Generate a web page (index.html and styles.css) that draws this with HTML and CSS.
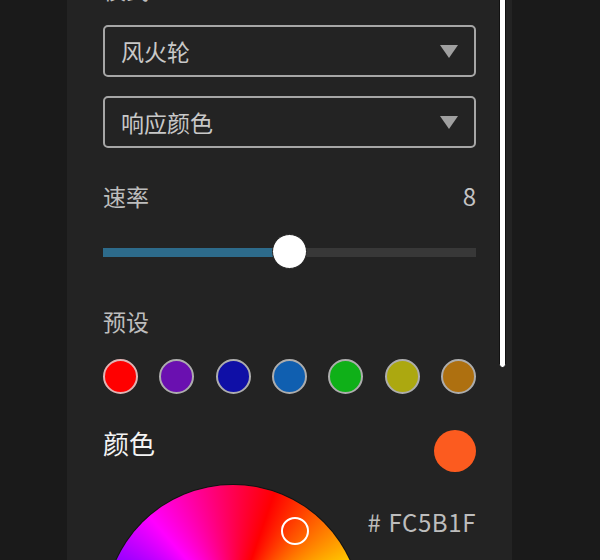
FILE: index.html
```html
<!DOCTYPE html>
<html lang="zh-CN">
<head>
<meta charset="utf-8">
<link rel="stylesheet" href="styles.css">
</head>
<body>
<div class="page">
  <div class="panel">
    <div class="content">
      <div class="label top-label">模式</div>

      <div class="select first">
        <span class="select-text">风火轮</span>
        <span class="caret"></span>
      </div>
      <div class="select second">
        <span class="select-text">响应颜色</span>
        <span class="caret"></span>
      </div>

      <div class="row speed-row">
        <span class="label">速率</span>
        <span class="value">8</span>
      </div>
      <div class="slider">
        <div class="track">
          <div class="fill" style="width:186px"></div>
        </div>
        <div class="thumb" style="left:169px"></div>
      </div>

      <div class="label preset-label">预设</div>
      <div class="swatches">
        <span class="swatch c1"></span>
        <span class="swatch c2"></span>
        <span class="swatch c3"></span>
        <span class="swatch c4"></span>
        <span class="swatch c5"></span>
        <span class="swatch c6"></span>
        <span class="swatch c7"></span>
      </div>

      <div class="row color-row">
        <span class="color-label">颜色</span>
        <span class="current"></span>
      </div>
      <div class="picker">
        <div class="wheel">
          <span class="marker"></span>
        </div>
        <div class="hex"><span class="hash">#</span>FC5B1F</div>
      </div>
    </div>
    <div class="scrollbar"></div>
  </div>
</div>
</body>
</html>
```
FILE: styles.css
```css
html, body {
  margin: 0;
  padding: 0;
  background: #1a1a1a;
  font-family: "Noto Sans CJK SC", "Noto Sans", sans-serif;
}
.page {
  display: flex;
  padding-left: 67px;
  height: 560px;
}
.panel {
  position: relative;
  width: 445px;
  height: 560px;
  overflow: hidden;
  background: #232323;
}
.content {
  padding: 0 36px;
  display: flex;
  flex-direction: column;
}
.label {
  font-size: 23px;
  line-height: 30px;
  color: #bdbdbd;
}
.top-label {
  margin-top: -26px;
}
.select {
  height: 52px;
  box-sizing: border-box;
  border: 2px solid #a6a6a6;
  border-radius: 5px;
  display: flex;
  align-items: center;
  justify-content: space-between;
  padding: 0 16px 0 16px;
}
.select.first { margin-top: 21px; }
.select.second { margin-top: 19px; }
.select-text {
  font-size: 23px;
  color: #c8c8c8;
  line-height: 30px;
}
.caret {
  width: 0;
  height: 0;
  border-left: 9px solid transparent;
  border-right: 9px solid transparent;
  border-top: 13px solid #a0a0a0;
}
.row {
  display: flex;
  justify-content: space-between;
}
.speed-row {
  margin-top: 33px;
  align-items: center;
}
.value {
  font-size: 24px;
  line-height: 30px;
  color: #c4c4c4;
}
.slider {
  position: relative;
  margin-top: 23px;
  height: 36px;
  display: flex;
  align-items: center;
}
.track {
  width: 100%;
  height: 9px;
  background: #383838;
}
.fill {
  height: 100%;
  background: #2d6b8b;
}
.thumb {
  position: absolute;
  top: 0;
  width: 35px;
  height: 35px;
  box-sizing: border-box;
  border-radius: 50%;
  background: #fff;
  border: 1px solid #222;
}
.preset-label {
  margin-top: 36px;
}
.swatches {
  margin-top: 23px;
  display: flex;
  justify-content: space-between;
}
.swatch {
  width: 35px;
  height: 35px;
  box-sizing: border-box;
  border-radius: 50%;
  border: 2px solid #adadad;
}
.c1 { background: #ff0000; border-color: #e0b4b4; }
.c2 { background: #6a10b0; }
.c3 { background: #0f0fa6; }
.c4 { background: #105fb0; }
.c5 { background: #0fb018; }
.c6 { background: #aca810; }
.c7 { background: #ae7010; }
.color-row {
  margin-top: 36px;
  align-items: flex-start;
}
.color-label {
  font-size: 26px;
  line-height: 34px;
  color: #f4f4f4;
  margin-top: -4px;
}
.current {
  width: 42px;
  height: 42px;
  border-radius: 50%;
  background: #fc5b1f;
}
.picker {
  margin-top: 13px;
  display: flex;
  align-items: flex-start;
}
.wheel {
  position: relative;
  flex: none;
  margin-left: 2px;
  width: 256px;
  height: 256px;
  border-radius: 50%;
  background: conic-gradient(from 19deg, #ff0000, #ffff00 60deg, #00ff00 120deg, #00ffff 180deg, #0000ff 240deg, #ff00ff 300deg, #ff0000 360deg);
  box-shadow: 0 0 0 1px rgba(0, 0, 0, 0.5);
}
.marker {
  position: absolute;
  left: 176px;
  top: 32px;
  width: 28px;
  height: 28px;
  box-sizing: border-box;
  border-radius: 50%;
  border: 2px solid #fff;
}
.hex {
  margin-left: auto;
  margin-top: 22px;
  font-size: 24px;
  line-height: 30px;
  color: #bdbdbd;
  letter-spacing: 0.6px;
}
.hash {
  margin-right: 7px;
}
.scrollbar {
  position: absolute;
  top: -6px;
  left: 432px;
  width: 7px;
  height: 374px;
  box-sizing: border-box;
  background: #fff;
  border: 1px solid #111;
  border-radius: 4px;
}
```
